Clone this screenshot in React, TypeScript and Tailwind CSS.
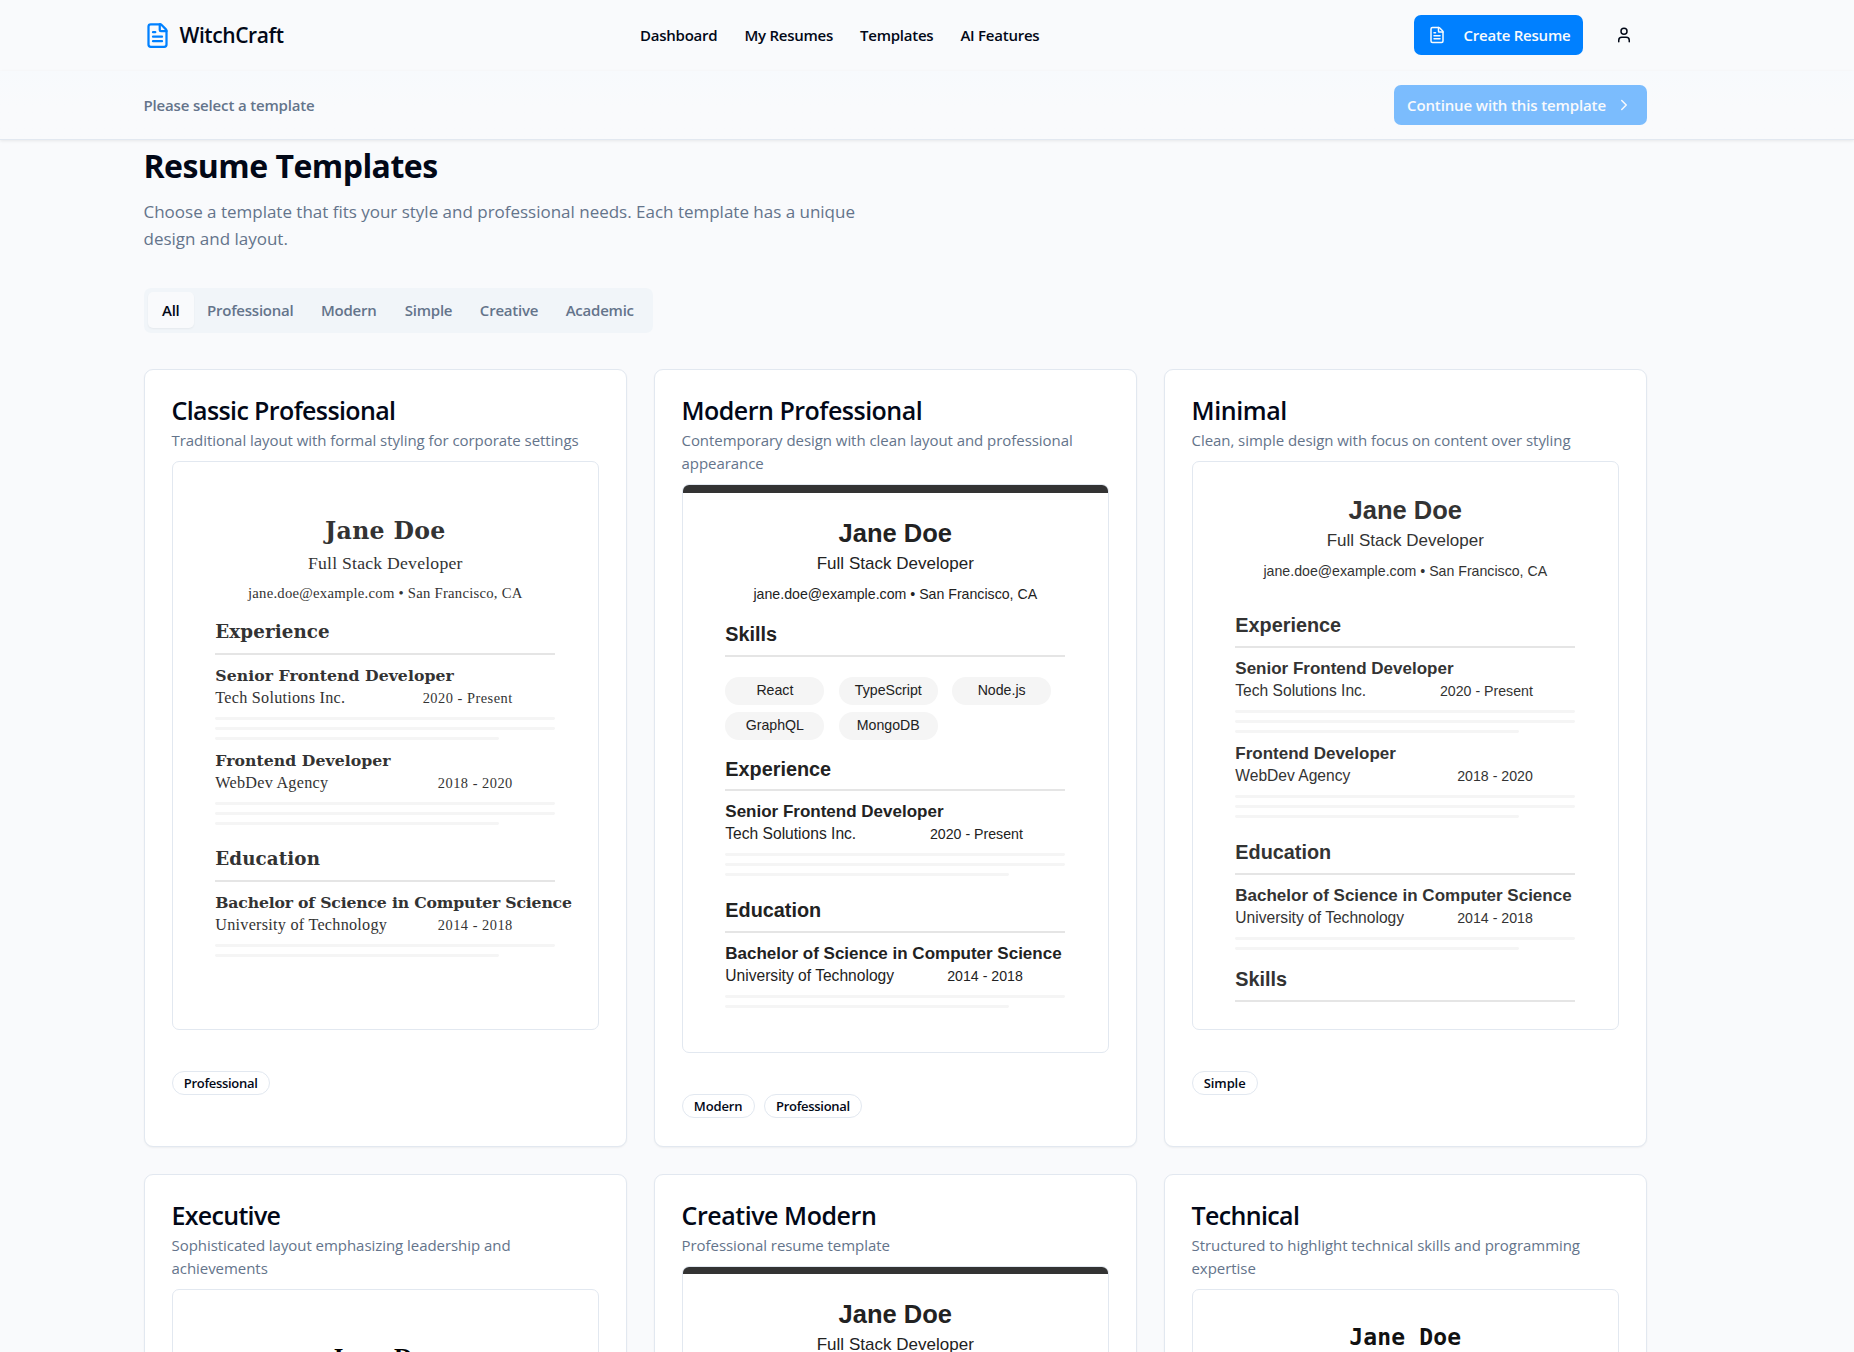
import React from "react";
import { ChevronRight, FileText, User } from "lucide-react";

type Variant = "classic" | "modern" | "minimal" | "executive" | "creative" | "technical";

interface FontSet {
  root: string;
  name: string;
  role: string;
  contact: string;
  section: string;
  title: string;
  degree: string;
  company: string;
  date: string;
}

const sans: FontSet = {
  root: "font-['Liberation_Sans',Arial,sans-serif]",
  name: "text-[25.5px]",
  role: "text-[17px] tracking-[0.02px]",
  contact: "text-[14.17px]",
  section: "text-[19.84px]",
  title: "text-[17px]",
  degree: "text-[17px]",
  company: "text-[15.6px]",
  date: "text-[14.17px]",
};

const georgia: FontSet = {
  root: "font-['Liberation_Serif',Georgia,serif]",
  name: "text-[23.6px] tracking-[0.3px] font-['DejaVu_Serif',Georgia,serif]",
  role: "text-[17.7px] tracking-[0.22px]",
  contact: "text-[14.7px] tracking-[0.25px]",
  section: "text-[18.3px] tracking-[0.1px] font-['DejaVu_Serif',Georgia,serif]",
  title: "text-[15.7px] tracking-[0.05px] font-['DejaVu_Serif',Georgia,serif]",
  degree: "text-[15.7px] tracking-[-0.19px] font-['DejaVu_Serif',Georgia,serif]",
  company: "text-[16.2px] tracking-[0.25px]",
  date: "text-[14.4px] tracking-[0.5px]",
};

const times: FontSet = { ...georgia, name: "text-[25.5px] tracking-[1.2px]" };

const mono: FontSet = {
  ...sans,
  root: "font-['DejaVu_Sans_Mono','Liberation_Mono',monospace]",
  name: "text-[23px] tracking-[0.15px]",
};

function Bars({ count }: { count: number }) {
  return (
    <div className="mt-[9.3px] flex flex-col gap-[7.09px]">
      {Array.from({ length: count }, (_, i) => (
        <div
          key={i}
          className={
            i === count - 1
              ? "h-[2.83px] w-[283.3px] rounded-[1.4px] bg-[#f5f5f5]"
              : "h-[2.83px] w-full rounded-[1.4px] bg-[#f5f5f5]"
          }
        />
      ))}
    </div>
  );
}

function Entry({ f, title, company, date, bars }: { f: FontSet; title: string; company: string; date: string; bars: number }) {
  return (
    <div className="h-[85px]">
      <div className={`h-6 leading-6 font-bold ${bars === 2 ? f.degree : f.title}`}>{title}</div>
      <div className="flex h-5 items-baseline justify-between pr-[42.5px] leading-5">
        <span className={f.company}>{company}</span>
        <span className={f.date}>{date}</span>
      </div>
      <Bars count={bars} />
    </div>
  );
}

function Section({ f, title, height, children }: { f: FontSet; title: string; height: string; children?: React.ReactNode }) {
  return (
    <section className={height}>
      <div className={`h-[30px] leading-[30px] font-bold ${f.section}`}>{title}</div>
      <div className="mt-[5.5px] mb-[9px] h-[2px] bg-[#e5e5e5]" />
      {children}
    </section>
  );
}

const senior = { title: "Senior Frontend Developer", company: "Tech Solutions Inc.", date: "2020 - Present", bars: 3 };
const junior = { title: "Frontend Developer", company: "WebDev Agency", date: "2018 - 2020", bars: 3 };
const degree = {
  title: "Bachelor of Science in Computer Science",
  company: "University of Technology",
  date: "2014 - 2018",
  bars: 2,
};

function SkillPills() {
  return (
    <div className="mt-[20px] grid grid-cols-[99.2px_99.2px_99.2px] gap-x-[14.2px] gap-y-[7.1px] text-[14.17px]">
      {["React", "TypeScript", "Node.js", "GraphQL", "MongoDB"].map((s) => (
        <span key={s} className="h-[28.3px] rounded-full bg-[#f5f5f5] text-center leading-[27.6px]">
          {s}
        </span>
      ))}
    </div>
  );
}

const looks: Record<Variant, { font: FontSet; color: string; pad: string; gap: string; banner: boolean }> = {
  classic: { font: georgia, color: "text-[#333333]", pad: "pt-[52px]", gap: "mt-[14.5px]", banner: false },
  modern: { font: sans, color: "text-[#222222]", pad: "pt-[23px]", gap: "mt-[15px]", banner: true },
  minimal: { font: sans, color: "text-[#333333]", pad: "pt-[30.4px]", gap: "mt-[28.8px]", banner: false },
  executive: { font: times, color: "text-black", pad: "pt-[51.5px]", gap: "mt-[15px]", banner: false },
  creative: { font: sans, color: "text-[#222222]", pad: "pt-[23px]", gap: "mt-[15px]", banner: true },
  technical: { font: mono, color: "text-[#111111]", pad: "pt-[30.4px]", gap: "mt-[28.8px]", banner: false },
};

function Preview({ variant }: { variant: Variant }) {
  const { font: f, color, pad, gap, banner } = looks[variant];
  const skillsFirst = variant === "modern" || variant === "creative";
  return (
    <div
      className={`mt-[9.3px] h-[568.7px] shrink-0 overflow-hidden rounded-[7px] border border-[#e2e8f0] bg-white whitespace-nowrap ${f.root} ${color}`}
    >
      {banner && <div className="h-[7.1px] bg-[#333333]" />}
      <div className={`pr-[42.2px] pl-[42.8px] ${pad}`}>
        <div className="text-center">
          <div className={`h-[34px] leading-[34px] font-bold ${f.name}`}>Jane Doe</div>
          <div className={`mt-[2.5px] h-6 leading-6 ${f.role}`}>Full Stack Developer</div>
          <div className={`mt-[8px] h-5 leading-5 ${f.contact}`}>jane.doe@example.com • San Francisco, CA</div>
        </div>
        <div className={gap}>
          {skillsFirst && (
            <Section f={f} title="Skills" height="h-[134.6px]">
              <SkillPills />
            </Section>
          )}
          <Section f={f} title="Experience" height={skillsFirst ? "h-[141.4px]" : "h-[226.9px]"}>
            <Entry f={f} {...senior} />
            {!skillsFirst && <Entry f={f} {...junior} />}
          </Section>
          <Section f={f} title="Education" height="h-[127.2px]">
            <Entry f={f} {...degree} />
          </Section>
          {variant === "minimal" && <Section f={f} title="Skills" height="h-[45px]" />}
        </div>
      </div>
    </div>
  );
}

interface Template {
  title: string;
  tracking: string;
  description: string;
  variant: Variant;
  tags: string[];
}

const templates: Template[] = [
  {
    title: "Classic Professional",
    tracking: "tracking-[-0.62px]",
    description: "Traditional layout with formal styling for corporate settings",
    variant: "classic",
    tags: ["Professional"],
  },
  {
    title: "Modern Professional",
    tracking: "tracking-[-0.5px]",
    description: "Contemporary design with clean layout and professional appearance",
    variant: "modern",
    tags: ["Modern", "Professional"],
  },
  {
    title: "Minimal",
    tracking: "tracking-[-0.4px]",
    description: "Clean, simple design with focus on content over styling",
    variant: "minimal",
    tags: ["Simple"],
  },
  {
    title: "Executive",
    tracking: "tracking-[-0.7px]",
    description: "Sophisticated layout emphasizing leadership and achievements",
    variant: "executive",
    tags: ["Professional"],
  },
  {
    title: "Creative Modern",
    tracking: "tracking-[-0.45px]",
    description: "Professional resume template",
    variant: "creative",
    tags: ["Creative", "Modern"],
  },
  {
    title: "Technical",
    tracking: "tracking-[-0.65px]",
    description: "Structured to highlight technical skills and programming expertise",
    variant: "technical",
    tags: ["Modern"],
  },
];

function TemplateCard({ t }: { t: Template }) {
  return (
    <article className="flex h-[777.4px] flex-col rounded-[9px] border border-[#e2e8f0] bg-white p-[27px] pt-[26px] shadow-[0_1px_2px_0_rgba(0,0,0,0.05)]">
      <h3 className={`text-[25px] leading-[28px] font-semibold ${t.tracking}`}>{t.title}</h3>
      <p className="mt-[5px] text-[15px] leading-[23px] tracking-[-0.05px] text-[#64748b]">{t.description}</p>
      <Preview variant={t.variant} />
      <div className="mt-[40.8px] flex gap-[9px]">
        {t.tags.map((tag) => (
          <span
            key={tag}
            className={`h-[24.4px] rounded-full border border-[#e2e8f0] px-[11.25px] text-[13px] leading-[22.4px] font-semibold ${
              tag === "Professional" ? "tracking-[-0.3px]" : "tracking-[-0.1px]"
            }`}
          >
            {tag}
          </span>
        ))}
      </div>
    </article>
  );
}

const tabs = [
  { label: "All", width: "w-[45.5px]" },
  { label: "Professional", width: "w-[113.5px]" },
  { label: "Modern", width: "w-[83.5px]" },
  { label: "Simple", width: "w-[76px]" },
  { label: "Creative", width: "w-[85px]" },
  { label: "Academic", width: "w-[96.5px]" },
];

export default function App() {
  return (
    <div className="h-[1352px] w-[1854px] overflow-hidden bg-[#f9fafc] font-['Open_Sans','Noto_Sans',sans-serif] text-[#020817]">
      <header className="h-[71px]">
        <div className="ml-[143.5px] flex h-full w-[1503px] items-center">
          <a className="flex w-[496.5px] items-center gap-[9px]">
            <FileText className="size-[27px] text-[#0080ff]" />
            <span className="text-[21px] font-semibold tracking-[-0.42px]">WitchCraft</span>
          </a>
          <nav className="flex items-center gap-[27px] text-[15px] font-semibold tracking-[-0.24px]">
            <a>Dashboard</a>
            <a>My Resumes</a>
            <a>Templates</a>
            <a>AI Features</a>
          </nav>
          <div className="ml-auto flex items-center gap-[18.5px]">
            <button className="-mt-px flex h-[40px] w-[169px] items-center rounded-[7px] bg-[#0080ff] pl-[13.5px] text-[15px] font-semibold tracking-[-0.22px] whitespace-nowrap text-[#f8fafc]">
              <FileText className="mr-[18px] size-[18px]" />
              Create Resume
            </button>
            <button className="flex size-[45px] items-center justify-center">
              <User className="-mt-px size-[18px]" />
            </button>
          </div>
        </div>
      </header>

      <div className="h-[69px] border-b border-[#e2e8f0] bg-gradient-to-b from-[#f7fafd] via-[#f9fafc] to-[#f9fafc] shadow-[0_1px_3px_0_rgba(0,0,0,0.08)]">
        <div className="ml-[143.5px] flex h-full w-[1503px] items-center justify-between">
          <span className="text-[15px] font-semibold tracking-[-0.16px] text-[#64748b]">Please select a template</span>
          <button className="flex h-[40px] w-[253px] items-center justify-between rounded-[7px] bg-[#0080ff] px-[13.5px] text-[15px] font-semibold tracking-[-0.12px] whitespace-nowrap text-[#f8fafc] opacity-50">
            Continue with this template
            <ChevronRight className="size-[18px]" />
          </button>
        </div>
      </div>

      <main className="ml-[143.5px] w-[1503px]">
        <h1 className="pt-[6px] text-[32px] leading-[40px] font-bold tracking-[-0.53px]">Resume Templates</h1>
        <p className="mt-[12px] w-[756px] text-[17px] leading-[27px] tracking-[-0.01px] text-[#64748b]">
          Choose a template that fits your style and professional needs. Each template has a unique design and layout.
        </p>

        <div className="mt-[35.6px] flex h-[45px] w-[509px] rounded-[7px] bg-[#f1f5f9] p-[4.5px] text-[15px] font-semibold tracking-[-0.23px] text-[#64748b]">
          {tabs.map((tab, i) => (
            <button
              key={tab.label}
              className={
                i === 0
                  ? `${tab.width} rounded-[5px] bg-[#f9fafc] text-center text-[#020817] shadow-[0_1px_2px_0_rgba(0,0,0,0.05)]`
                  : `${tab.width} text-center`
              }
            >
              {tab.label}
            </button>
          ))}
        </div>

        <div className="mt-[36.6px] grid grid-cols-3 gap-[27px]">
          {templates.map((t) => (
            <TemplateCard key={t.title} t={t} />
          ))}
        </div>
      </main>
    </div>
  );
}
